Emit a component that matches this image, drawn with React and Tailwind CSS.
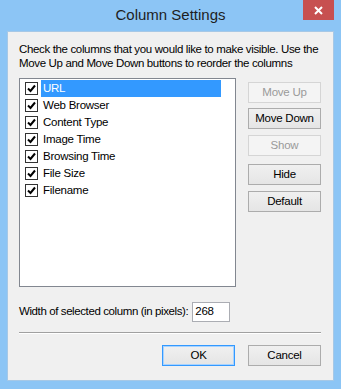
const columns = ['URL', 'Web Browser', 'Content Type', 'Image Time', 'Browsing Time', 'File Size', 'Filename']

function CheckBox() {
  return (
    <span className="flex h-[13px] w-[13px] shrink-0 items-center justify-center border border-[#333] bg-white">
      <svg width="9" height="9" viewBox="0 0 9 9">
        <path d="M1 4.5 L3.5 7 L8 1.5" fill="none" stroke="#000" strokeWidth="2" />
      </svg>
    </span>
  )
}

function Button({ children, disabled, primary }) {
  let cls = 'flex h-[21px] w-[73px] items-center justify-center '
  if (disabled) cls += 'border border-[#d5d5d5] bg-[#f4f4f4] text-[#9a9a9a]'
  else if (primary) cls += 'border border-[#3399ff] bg-gradient-to-b from-[#f0f0f0] to-[#e5e5e5] text-black shadow-[inset_0_0_0_1px_#a8d3ff]'
  else cls += 'border border-[#acacac] bg-gradient-to-b from-[#f0f0f0] to-[#e5e5e5] text-black'
  return <div className={cls}>{children}</div>
}

export default function App() {
  return (
    <div className="flex h-[389px] w-[341px] flex-col bg-[#8cc5f5] font-['Liberation_Sans',sans-serif]">
      {/* Title bar */}
      <div className="relative flex h-[31px] shrink-0 items-center justify-center">
        <span className="pb-[1px] text-[15px] text-[#1e1e1e]">Column Settings</span>
        <div className="absolute right-[7px] top-0 flex h-[20px] w-[31px] items-center justify-center bg-[#c75050]">
          <svg width="9" height="9" viewBox="0 0 9 9">
            <path d="M1 1 L8 8 M8 1 L1 8" stroke="#fff" strokeWidth="2" />
          </svg>
        </div>
      </div>

      {/* Client area */}
      <div className="mx-[7px] flex h-[350px] flex-col border border-[#a6c8e6] bg-[#f0f0f0] px-[11px] pt-[10px] text-[11.5px] tracking-[-0.25px] text-black">
        <p className="whitespace-nowrap leading-[14px] tracking-[-0.35px]">
          Check the columns that you would like to make visible. Use the
          <br />
          Move Up and Move Down buttons to reorder the columns
        </p>

        <div className="mt-[8px] flex gap-[12px]">
          <div className="h-[209px] w-[217px] border border-[#828790] bg-white pt-[1px]">
            {columns.map((c, i) => (
              <div key={c} className="flex h-[17px] items-center">
                <div className="ml-[5px] mr-[3px]">
                  <CheckBox />
                </div>
                <div className={'flex h-[17px] w-[180px] items-center pl-[2px] ' + (i === 0 ? 'bg-[#3399ff] text-white' : '')}>
                  {c}
                </div>
              </div>
            ))}
          </div>

          <div className="flex flex-col pt-[4px]">
            <Button disabled>Move Up</Button>
            <div className="mt-[5px]"><Button>Move Down</Button></div>
            <div className="mt-[6px]"><Button disabled>Show</Button></div>
            <div className="mt-[8px]"><Button>Hide</Button></div>
            <div className="mt-[6px]"><Button>Default</Button></div>
          </div>
        </div>

        <div className="mt-[15px] flex items-center gap-[4px]">
          <span className="tracking-[-0.4px]">Width of selected column (in pixels):</span>
          <div className="flex h-[20px] w-[38px] items-center border border-[#abadb3] bg-white pl-[2px]">268</div>
        </div>

        <div className="mt-[10px] h-[2px] w-[302px] border-t border-[#a0a0a0] border-b border-b-white" />

        <div className="mt-[11px] flex justify-end gap-[13px] pr-[1px]">
          <Button primary>OK</Button>
          <Button>Cancel</Button>
        </div>
      </div>
    </div>
  )
}
